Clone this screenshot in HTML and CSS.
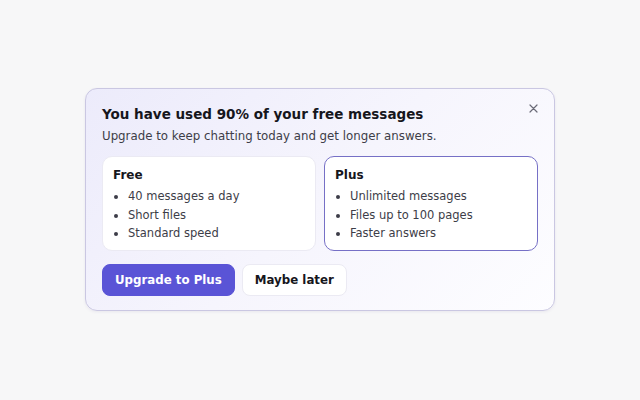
FILE: index.html
```html
<!DOCTYPE html>
<html lang="en">
<head>
<meta charset="utf-8">
<title>Upgrade</title>
<link rel="stylesheet" href="styles.css">
</head>
<body>
<main class="stage">
  <section class="card">
    <button class="close" aria-label="Close">
      <svg width="9" height="9" viewBox="0 0 9 9"><path d="M1 1L8 8M8 1L1 8" stroke="#6b6b78" stroke-width="1.2" stroke-linecap="round"/></svg>
    </button>
    <h1 class="title">You have used 90% of your free messages</h1>
    <p class="subtitle">Upgrade to keep chatting today and get longer answers.</p>
    <div class="plans">
      <div class="plan">
        <h2 class="plan-name">Free</h2>
        <ul class="plan-list">
          <li>40 messages a day</li>
          <li>Short files</li>
          <li>Standard speed</li>
        </ul>
      </div>
      <div class="plan plan-plus">
        <h2 class="plan-name">Plus</h2>
        <ul class="plan-list">
          <li>Unlimited messages</li>
          <li>Files up to 100 pages</li>
          <li>Faster answers</li>
        </ul>
      </div>
    </div>
    <div class="actions">
      <button class="btn btn-primary">Upgrade to Plus</button>
      <button class="btn btn-secondary">Maybe later</button>
    </div>
  </section>
</main>
</body>
</html>
```
FILE: styles.css
```css
* { box-sizing: border-box; }
html, body { margin: 0; padding: 0; }
body {
  background: #f7f7f8;
  font-family: "DejaVu Sans", sans-serif;
  color: #1a1a22;
  width: 640px;
  height: 400px;
}
.stage {
  display: flex;
  justify-content: center;
  padding-top: 88px;
}
.card {
  position: relative;
  width: 470px;
  border: 1px solid #cac7e2;
  border-radius: 12px;
  background: linear-gradient(135deg, #ecebfb 0%, #f6f5fd 50%, #fdfdff 100%);
  padding: 15px 16px 14px 16px;
  box-shadow: 0 1px 3px rgba(60, 50, 120, 0.08);
}
.close {
  position: absolute;
  top: 15px;
  right: 16px;
  width: 9px;
  height: 9px;
  padding: 0;
  border: 0;
  background: transparent;
  display: flex;
  align-items: center;
  justify-content: center;
}
.title {
  margin: 0;
  font-size: 13.5px;
  font-weight: bold;
  line-height: 20px;
  color: #16161c;
}
.subtitle {
  margin: 3px 0 0;
  font-size: 11.8px;
  line-height: 18px;
  color: #3d3d48;
}
.plans {
  display: grid;
  grid-template-columns: 1fr 1fr;
  gap: 8px;
  margin-top: 11px;
}
.plan {
  background: #ffffff;
  border: 1px solid #ebeaf3;
  border-radius: 10px;
  padding: 9px 10px 7px;
}
.plan-plus {
  border-color: #7670c6;
}
.plan-name {
  margin: 0;
  font-size: 12px;
  font-weight: bold;
  line-height: 18px;
  color: #16161c;
}
.plan-list {
  margin: 3px 0 0;
  padding-left: 15px;
  font-size: 11.5px;
  line-height: 18.5px;
  color: #3d3d48;
}
.actions {
  display: flex;
  gap: 7px;
  margin-top: 13px;
}
.btn {
  height: 32px;
  border-radius: 8px;
  font-family: "DejaVu Sans", sans-serif;
  font-size: 11.8px;
  font-weight: bold;
  padding: 0 12px;
  cursor: pointer;
}
.btn-primary {
  background: #5a54d6;
  color: #ffffff;
  border: 1px solid #5a54d6;
}
.btn-secondary {
  background: #ffffff;
  color: #16161c;
  border: 1px solid #ebeaf3;
}
```
